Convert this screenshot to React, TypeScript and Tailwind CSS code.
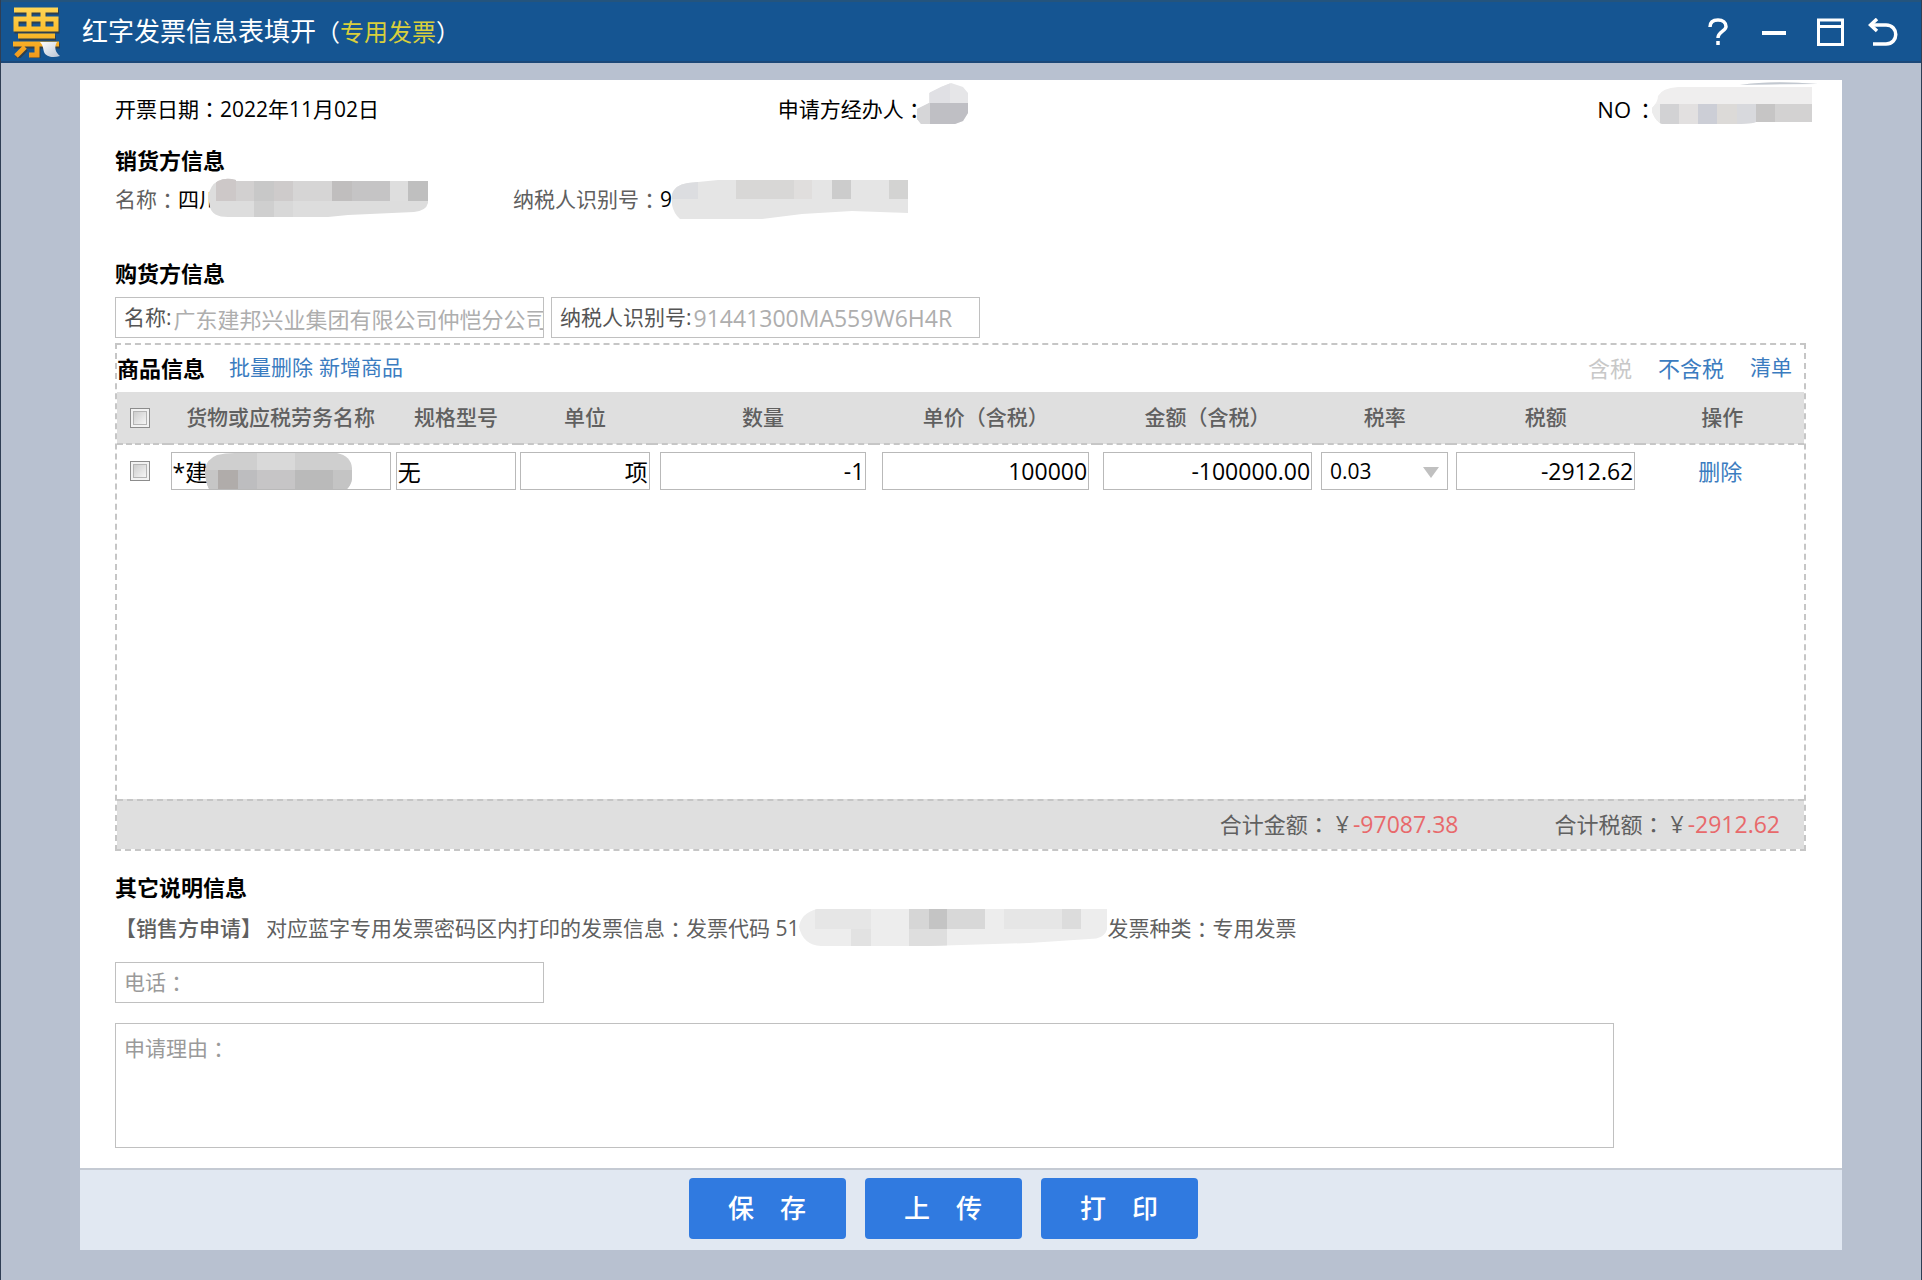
import { useState } from 'react';

type Block = [x: number, y: number, w: number, h: number, fill: string];

type SmudgeProps = {
  id: string;
  width: number;
  height: number;
  outline: string;
  base: string;
  blocks: Block[];
  className?: string;
};

// Pixelated cover that hides private values
function Smudge({ id, width, height, outline, base, blocks, className }: SmudgeProps) {
  return (
    <svg
      aria-hidden="true"
      width={width}
      height={height}
      viewBox={`0 0 ${width} ${height}`}
      className={`shrink-0 ${className ?? ''}`}
    >
      <clipPath id={id}>
        <path d={outline} />
      </clipPath>
      <g clipPath={`url(#${id})`}>
        <rect width={width} height={height} fill={base} />
        {blocks.map(([x, y, w, h, fill]) => (
          <rect key={`${x}-${y}`} x={x} y={y} width={w} height={h} fill={fill} />
        ))}
      </g>
    </svg>
  );
}

// Full-width colon, centred in its box
function Colon() {
  return <span className="font-['Noto_Sans_CJK_TC',sans-serif]">：</span>;
}

function Logo() {
  const strokes = 'M2 4H46M4 13H44V23H4ZM17 5V23M31 5V23M6 30H43M1 38H47M25 38V49H17M13 41L4 50';
  return (
    <svg aria-hidden="true" width="50" height="52" viewBox="0 0 50 52" className="shrink-0">
      <defs>
        <linearGradient id="gold" gradientUnits="userSpaceOnUse" x1="0" y1="0" x2="0" y2="52">
          <stop offset="0" stopColor="#ffd75a" />
          <stop offset="0.5" stopColor="#fbbd2c" />
          <stop offset="1" stopColor="#f0981c" />
        </linearGradient>
        <linearGradient id="paper" x1="0" y1="0" x2="1" y2="1">
          <stop offset="0" stopColor="#ffffff" />
          <stop offset="1" stopColor="#b9c4d4" />
        </linearGradient>
      </defs>
      <path d={strokes} fill="none" stroke="#2f3f4c" strokeWidth="5" transform="translate(1 2)" />
      <path d={strokes} fill="none" stroke="url(#gold)" strokeWidth="5" />
      <path d="M28 36H45C42 41 43 46 48 50C41 52 34 51 32 46C31 42 31 39 28 36Z" fill="url(#paper)" />
    </svg>
  );
}

function TitleBar() {
  return (
    <header className="flex h-[63px] items-center border-t-2 border-b-2 border-t-[#24547d] border-b-[#1c4878] bg-[#155592] pr-[23px] pl-[11px] text-white">
      <Logo />
      <h1 className="ml-5 flex flex-1 items-center text-[26px]">
        红字发票信息表填开
        <span className="text-2xl">
          （<span className="text-[#d9cf3c]">专用发票</span>）
        </span>
      </h1>
      <div className="flex items-center">
        <button type="button" aria-label="帮助" className="mr-[34px]">
          <svg width="20" height="28" viewBox="0 0 20 28" fill="none" stroke="currentColor" strokeWidth="3.500">
            <path d="M2 9C2 4 5 2 10 2S18 5 18 8.500C18 13 10 13.500 10 20" />
            <path d="M10 23V27" />
          </svg>
        </button>
        <button type="button" aria-label="最小化" className="mr-[31px]">
          <svg width="24" height="28" viewBox="0 0 24 28">
            <rect y="13" width="24" height="4" fill="currentColor" />
          </svg>
        </button>
        <button type="button" aria-label="最大化" className="mr-6">
          <svg width="27" height="28" viewBox="0 0 27 28" fill="none" stroke="currentColor" strokeWidth="3">
            <rect x="1.500" y="2" width="24" height="24.500" />
            <path d="M1 8.500H26" />
          </svg>
        </button>
        <button type="button" aria-label="返回">
          <svg width="30" height="28" viewBox="0 0 30 28" fill="none" stroke="currentColor" strokeWidth="3.500">
            <path d="M2 7H18C31 7 31 26 18 26H5" />
            <path d="M9 1L2.500 7L9 13" />
          </svg>
        </button>
      </div>
    </header>
  );
}

const checkboxClass =
  'block size-5 appearance-none border border-[#8c8c8c] bg-linear-to-br from-[#c4c4c4] to-white shadow-[inset_0_0_0_2px_#f2f2f2,inset_0_0_0_3px_#b4b4b4] checked:bg-[#3b7cc0]';
const cellInput =
  'block h-[38px] w-full border border-[#b9b9b9] bg-white px-px text-[23px] text-black outline-none';

function GoodsTable() {
  const [rate, setRate] = useState('0.03');
  return (
    <table className="w-full table-fixed border-collapse">
      <colgroup>
        <col className="w-[3%]" />
        <col className="w-[13.4%]" />
        <col className="w-[7.4%]" />
        <col className="w-[7.9%]" />
        <col className="w-[13.2%]" />
        <col className="w-[13.2%]" />
        <col className="w-[13.1%]" />
        <col className="w-[7.9%]" />
        <col className="w-[11.2%]" />
        <col className="w-[9.7%]" />
      </colgroup>
      <thead>
        <tr className="h-[52px] border-b-2 border-dashed border-[#c6c6c6] bg-[#dfdfdf] text-[21px] whitespace-nowrap text-[#606060] [&>th]:font-medium">
          <th className="pl-[13px]">
            <input type="checkbox" aria-label="全选" className={checkboxClass} />
          </th>
          <th>货物或应税劳务名称</th>
          <th>规格型号</th>
          <th>单位</th>
          <th>数量</th>
          <th>单价（含税）</th>
          <th>金额（含税）</th>
          <th>税率</th>
          <th>税额</th>
          <th>操作</th>
        </tr>
      </thead>
      <tbody>
        <tr className="[&>td]:py-[7px]">
          <td className="pl-[13px]">
            <input type="checkbox" aria-label="选择" className={checkboxClass} />
          </td>
          <td className="relative px-[3px]">
            <input aria-label="货物或应税劳务名称" defaultValue="*建" className={cellInput} />
            <Smudge
              id="smudge-goods"
              width={147}
              height={36}
              base="#cfcfcf"
              outline="M12 2Q20 0 30 0H132Q146 3 147 15V26Q146 32 142 36H4Q0 28 0 16Q2 6 12 2Z"
              blocks={[
                [0, 17, 13, 20, '#c6c6c6'],
                [13, 17, 20, 20, '#b0acaa'],
                [33, 17, 19, 20, '#bdbdbf'],
                [52, 0, 38, 17, '#d9d9d9'],
                [52, 17, 38, 20, '#c6c5c6'],
                [90, 17, 38, 20, '#bababa'],
                [128, 17, 20, 20, '#c4c4c4'],
              ]}
              className="absolute top-2 left-[37px]"
            />
          </td>
          <td className="px-[2px]">
            <input aria-label="规格型号" defaultValue="无" className={cellInput} />
          </td>
          <td className="px-[2px]">
            <input aria-label="单位" defaultValue="项" className={`${cellInput} text-right`} />
          </td>
          <td className="px-2">
            <input aria-label="数量" defaultValue="-1" className={`${cellInput} text-right`} />
          </td>
          <td className="px-2">
            <input aria-label="单价" defaultValue="100000" className={`${cellInput} text-right`} />
          </td>
          <td className="px-[6px]">
            <input aria-label="金额" defaultValue="-100000.00" className={`${cellInput} text-right`} />
          </td>
          <td className="relative px-[3px]">
            <select
              aria-label="税率"
              value={rate}
              onChange={(e) => setRate(e.target.value)}
              className="block h-[38px] w-full appearance-none border border-[#b9b9b9] bg-white pl-2 text-[21px] text-black outline-none"
            >
              <option>0.03</option>
            </select>
            <svg
              aria-hidden="true"
              width="16"
              height="11"
              viewBox="0 0 16 11"
              className="pointer-events-none absolute top-[22px] right-3"
            >
              <path d="M0 0H16L8 11Z" fill="#c0c0c0" />
            </svg>
          </td>
          <td className="px-[5px]">
            <input aria-label="税额" defaultValue="-2912.62" className={`${cellInput} text-right`} />
          </td>
          <td className="pr-1 text-center text-[22px]">
            <a href="#delete" className="text-[#3b7cc0]">
              删除
            </a>
          </td>
        </tr>
      </tbody>
    </table>
  );
}

function GoodsSection() {
  return (
    <section className="mt-[5px] border-2 border-dashed border-[#c6c6c6]">
      <div className="flex h-[47px] items-center pr-3 pb-[2px] text-[21px] text-[#3b7cc0]">
        <h2 className="mr-6 text-[22px] font-bold text-black">商品信息</h2>
        <a href="#batch-delete" className="mr-[6px]">
          批量删除
        </a>
        <a href="#add">新增商品</a>
        <div className="ml-auto flex items-center gap-[26px]">
          <span className="text-[22px] text-[#c8c8c8]">含税</span>
          <a href="#no-tax" className="text-[22px]">
            不含税
          </a>
          <a href="#list">清单</a>
        </div>
      </div>
      <div className="min-h-[407px]">
        <GoodsTable />
      </div>
      <div className="flex h-[50px] items-center justify-end gap-24 border-t-2 border-dashed border-[#c6c6c6] bg-[#dfdfdf] pr-6 pb-[2px] text-[22px] text-[#606060]">
        <p>
          合计金额
          <Colon />
          <span className="mr-1 ml-[6px] text-[23px]">¥</span>
          <span className="text-[23px] text-[#e8696b]">-97087.38</span>
        </p>
        <p>
          合计税额
          <Colon />
          <span className="mr-1 ml-[6px] text-[23px]">¥</span>
          <span className="text-[23px] text-[#e8696b]">-2912.62</span>
        </p>
      </div>
    </section>
  );
}

const headingClass = 'flex h-[46px] items-center pb-[2px] text-[22px] font-bold text-black';
const fieldClass = 'flex h-[41px] items-center border border-[#c0c0c0] bg-white pl-2 whitespace-nowrap';

function App() {
  return (
    <div className="flex min-h-screen flex-col border-x border-[#2f3e54] bg-[#b8c1d0] font-['Open_Sans','Noto_Sans_CJK_SC',sans-serif]">
      <TitleBar />
      <main className="mx-[79px] mt-[17px] mb-[30px] flex flex-1 flex-col bg-white text-[21px] leading-none">
        <div className="flex-1 pr-9 pl-[35px]">
          <div className="flex h-[58px] items-center whitespace-nowrap text-black">
            <p className="w-[39.2%]">
              开票日期
              <Colon />
              2022年11月02日
            </p>
            <p className="flex flex-1 items-center">
              申请方经办人
              <Colon />
              <Smudge
                id="smudge-agent"
                width={52}
                height={52}
                base="#e6e6e8"
                outline="M0 30L12 24V14L24 8L34 4L46 8L51 14V34L46 42L38 45H4L0 40Z"
                blocks={[
                  [0, 24, 13, 28, '#d6d6d8'],
                  [13, 24, 39, 28, '#bfbfc4'],
                  [13, 0, 20, 24, '#e0e0e4'],
                ]}
                className="-mt-2 -ml-2"
              />
            </p>
            <p className="-mr-3 flex items-center">
              <span className="mr-1 text-[22px]">NO</span>
              <Colon />
              <Smudge
                id="smudge-no"
                width={166}
                height={54}
                base="#efeeee"
                outline="M0 30Q6 24 6 18Q10 10 26 9H160V44H104Q100 46 80 46H10Q4 44 0 34Z M88 7Q120 2 166 6Q120 6 88 7Z"
                blocks={[
                  [88, 0, 78, 8, '#c2c8d0'],
                  [0, 26, 8, 28, '#ececec'],
                  [8, 26, 19, 28, '#d2d2d4'],
                  [27, 26, 19, 28, '#e2e0e0'],
                  [46, 26, 19, 28, '#ccced6'],
                  [65, 26, 20, 28, '#dcdad8'],
                  [85, 26, 19, 28, '#d8d9dd'],
                  [104, 26, 19, 28, '#c6c5c5'],
                  [123, 26, 41, 28, '#d3d2d2'],
                ]}
                className="-mt-2 -ml-1"
              />
            </p>
          </div>

          <h2 className={headingClass}>销货方信息</h2>
          <div className="flex h-[30px] items-center whitespace-nowrap text-[#606060]">
            <p className="flex w-[398px] items-center">
              名称
              <Colon />
              <span className="text-black">四川</span>
              <Smudge
                id="smudge-seller"
                width={220}
                height={40}
                base="#dddddd"
                outline="M0 20Q2 8 10 4Q18 0 28 3V4H220V26Q218 34 206 35L140 38L120 40H20Q4 40 2 30Z"
                blocks={[
                  [8, 0, 20, 24, '#cdc8c8'],
                  [28, 0, 18, 24, '#d2d0d0'],
                  [46, 0, 20, 24, '#c8c8c8'],
                  [46, 24, 20, 16, '#cfcfcf'],
                  [66, 0, 19, 24, '#cecbcb'],
                  [85, 0, 39, 24, '#d6d5d5'],
                  [66, 24, 19, 16, '#d8d8d8'],
                  [124, 0, 20, 24, '#c0bebe'],
                  [144, 0, 38, 24, '#c5c4c5'],
                  [182, 0, 18, 24, '#dedede'],
                  [200, 0, 20, 24, '#bfbfbf'],
                ]}
                className="-mt-1 -ml-3"
              />
            </p>
            <p className="flex items-center">
              纳税人识别号
              <Colon />
              <span className="text-black">9</span>
              <Smudge
                id="smudge-taxno"
                width={236}
                height={40}
                base="#e5e5e5"
                outline="M0 16Q2 6 16 4L46 1H236V34L180 32L130 35L90 40H8Q2 35 0 26Z"
                blocks={[
                  [0, 0, 26, 20, '#dcdde0'],
                  [64, 0, 58, 20, '#d8d7d6'],
                  [122, 0, 18, 20, '#e0dedd'],
                  [160, 0, 19, 20, '#cccccc'],
                  [217, 0, 19, 20, '#d3d3d2'],
                ]}
              />
            </p>
          </div>

          <h2 className={`mt-[37px] ${headingClass}`}>购货方信息</h2>
          <div className="flex gap-[7px] text-[#555555]">
            <label className={`w-[429px] ${fieldClass}`}>
              名称:
              <input
                defaultValue="广东建邦兴业集团有限公司仲恺分公司"
                className="ml-[2px] h-full min-w-0 flex-1 text-[22px] text-[#aeaeae] outline-none"
              />
            </label>
            <label className={`w-[429px] ${fieldClass}`}>
              纳税人识别号:
              <input
                defaultValue="91441300MA559W6H4R"
                className="ml-[2px] h-full min-w-0 flex-1 text-[23px] text-[#aeaeae] outline-none"
              />
            </label>
          </div>

          <GoodsSection />

          <h2 className={`mt-[14px] ${headingClass}`}>其它说明信息</h2>
          <div className="flex h-[34px] items-center whitespace-nowrap text-[#606060]">
            <strong className="mr-1 font-medium">【销售方申请】</strong>
            对应蓝字专用发票密码区内打印的发票信息
            <Colon />
            发票代码 51
            <Smudge
              id="smudge-code"
              width={308}
              height={38}
              base="#ededed"
              outline="M0 18Q2 4 18 0H308V20Q306 30 290 30L230 34L130 37H22Q4 36 0 18Z"
              blocks={[
                [16, 0, 56, 20, '#e6e6e6'],
                [52, 20, 20, 18, '#e2e2e2'],
                [110, 0, 20, 20, '#d6d6d6'],
                [110, 20, 38, 18, '#dedede'],
                [130, 0, 18, 20, '#c4c4c4'],
                [148, 0, 38, 20, '#d8d8d8'],
                [205, 0, 58, 20, '#e6e6e6'],
                [263, 0, 19, 20, '#dcdcdc'],
              ]}
            />
            发票种类
            <Colon />
            专用发票
          </div>

          <label className={`mt-[17px] w-[429px] text-[#9a9a9a] ${fieldClass}`}>
            电话
            <Colon />
            <input className="h-full min-w-0 flex-1 text-black outline-none" />
          </label>
          <label className="mt-5 mb-5 flex h-[125px] w-[1499px] max-w-full border border-[#c0c0c0] pt-[14px] pl-2 whitespace-nowrap text-[#9a9a9a]">
            申请理由
            <Colon />
            <textarea className="min-w-0 flex-1 resize-none text-black outline-none" />
          </label>
        </div>

        <footer className="flex h-[82px] items-center justify-center gap-[19px] border-t-2 border-[#c4cad3] bg-[#e1e8f2] pr-9 pb-1 text-[26px] font-medium text-white">
          <button type="button" className="h-[61px] w-[157px] rounded-[4px] bg-[#307ae0]">
            保　存
          </button>
          <button type="button" className="h-[61px] w-[157px] rounded-[4px] bg-[#307ae0]">
            上　传
          </button>
          <button type="button" className="h-[61px] w-[157px] rounded-[4px] bg-[#307ae0]">
            打　印
          </button>
        </footer>
      </main>
    </div>
  );
}

export default App;
